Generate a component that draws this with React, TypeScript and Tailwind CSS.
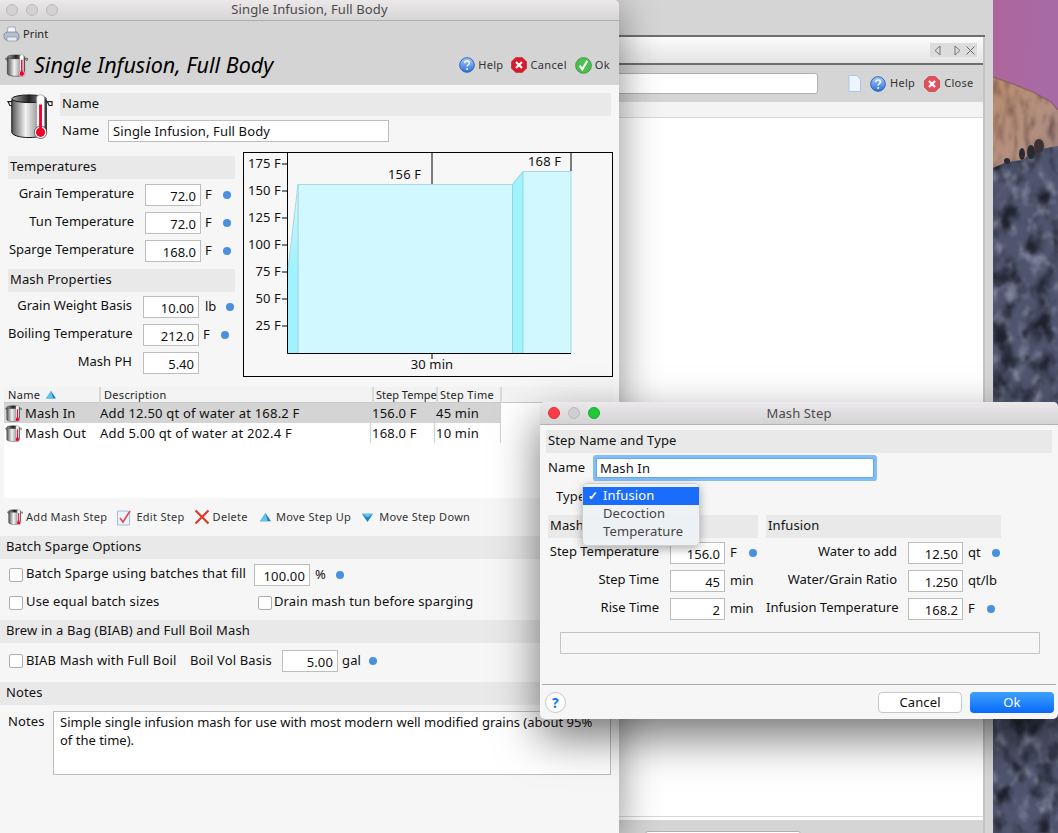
import type { ReactNode } from 'react';

function PotIcon({ size = 20 }: { size?: number }) {
  return (
    <svg width={size} height={size} viewBox="0 0 48 48" className="shrink-0">
      <defs>
        <linearGradient id="potBody" x1="0" x2="1" y1="0" y2="0">
          <stop offset="0" stopColor="#555" />
          <stop offset="0.4" stopColor="#f2f2f2" />
          <stop offset="0.7" stopColor="#a8a8a8" />
          <stop offset="1" stopColor="#444" />
        </linearGradient>
        <linearGradient id="potIn" x1="0" x2="1" y1="0" y2="0">
          <stop offset="0" stopColor="#aaa" />
          <stop offset="0.5" stopColor="#222" />
          <stop offset="1" stopColor="#aaa" />
        </linearGradient>
      </defs>
      <path d="M1 9h5v4H3zM42 9h5v4h-3z" fill="none" stroke="#222" strokeWidth="1.2" />
      <path d="M5 7v34c0 3 8 5.5 18 5.5s18-2.500 18-5.500V7z" fill="url(#potBody)" stroke="#111" strokeWidth="1" />
      <ellipse cx="23" cy="6" rx="18" ry="4" fill="url(#potIn)" stroke="#111" strokeWidth="1" />
      <rect x="31" y="2" width="8" height="35" rx="3" fill="#fff" stroke="#999" strokeWidth="0.8" />
      <circle cx="35" cy="41" r="6.500" fill="#fff" stroke="#444" strokeWidth="0.8" />
      <rect x="33.500" y="12" width="3" height="26" fill="#f5002c" />
      <circle cx="35" cy="41" r="4.800" fill="#f5002c" />
    </svg>
  );
}

function HelpIcon({ size = 16 }: { size?: number }) {
  return (
    <svg width={size} height={size} viewBox="0 0 16 16" className="shrink-0">
      <defs>
        <linearGradient id="helpFill" x1="0" x2="0" y1="0" y2="1">
          <stop offset="0" stopColor="#a9ccf7" />
          <stop offset="1" stopColor="#2c6fdc" />
        </linearGradient>
      </defs>
      <circle cx="8" cy="8" r="7.300" fill="url(#helpFill)" stroke="#2458b5" strokeWidth="0.9" />
      <path d="M5.600 6.200c0-1.500 1-2.200 2.400-2.200s2.400.8 2.400 2c0 1.700-2.300 1.800-2.300 3.600" fill="none" stroke="#fff" strokeWidth="1.500" />
      <circle cx="8.100" cy="12" r="1" fill="#fff" />
    </svg>
  );
}

function CancelIcon({ size = 16, light = false }: { size?: number; light?: boolean }) {
  return (
    <svg width={size} height={size} viewBox="0 0 16 16" className="shrink-0">
      <path d="M4.800.4h6.400L15.600 4.800v6.400L11.200 15.600H4.800L.4 11.200V4.800z" fill={light ? '#e4505a' : '#d81b2c'} stroke="#a51622" strokeWidth="0.5" />
      <path d="M5 5l6 6M11 5l-6 6" stroke="#fff" strokeWidth="2.200" />
    </svg>
  );
}

function OkIcon() {
  return (
    <svg width={17} height={17} viewBox="0 0 16 16" className="shrink-0">
      <circle cx="8" cy="8" r="7.400" fill="#4cc04f" stroke="#2c8b35" strokeWidth="0.7" />
      <path d="M4.400 8.200l2.500 3.400L11.600 3.600" fill="none" stroke="#fff" strokeWidth="2" />
    </svg>
  );
}

function PrinterIcon() {
  return (
    <svg width={17} height={17} viewBox="0 0 17 17" className="shrink-0">
      <path d="M5 1h7l1 6H4z" fill="#f4f6fa" stroke="#8b97a8" strokeWidth="0.7" />
      <path d="M1 8l3-2h10l2 3v4l-2 1H3l-2-2z" fill="#b5c0cc" stroke="#6f7d8c" strokeWidth="0.7" />
      <path d="M4 11h10v4H4z" fill="#e6ebf1" stroke="#7f8b99" strokeWidth="0.6" />
    </svg>
  );
}

function Triangle({ down = false, size = 9 }: { down?: boolean; size?: number }) {
  return (
    <svg width={size} height={size} viewBox="0 0 10 10" className="shrink-0">
      <path d={down ? 'M0 1.500h10L5 9z' : 'M5 1L10 8.500H0z'} fill="#1c7fc8" />
      <path d={down ? 'M0 1.500h10L5 5z' : 'M5 1L7 8.500H0z'} fill="#6fd0f2" opacity="0.85" />
    </svg>
  );
}

function Dot() {
  return <span className="block w-[8px] h-[8px] rounded-full bg-[#4a90e2] shrink-0" />;
}

function Bar({ children, className = '' }: { children: ReactNode; className?: string }) {
  return (
    <div className={`h-[23px] bg-[#e9e9e9] flex items-center pb-[2px] text-[13px] ${className}`}>{children}</div>
  );
}

function NumBox({ value, w = 56 }: { value: string; w?: number }) {
  return (
    <div
      className="h-[22px] bg-white border border-[#bdbdbd] text-right pr-[4px] pt-[2px] text-[13px] leading-[18px] shrink-0"
      style={{ width: w }}
    >
      {value}
    </div>
  );
}

function Check() {
  return <span className="block w-[14px] h-[14px] rounded-[2px] bg-white border border-[#aeaeae] shrink-0" />;
}

function FormRow({ label, value, unit, inputAt, dotGap, unitGap = 4 }: { label: string; value: string; unit?: string; inputAt: number; dotGap?: number; unitGap?: number }) {
  return (
    <div className="h-[28px] flex items-center text-[13px] tracking-normal">
      <span className="text-right pr-[11px] pb-[2px] whitespace-nowrap shrink-0" style={{ width: inputAt }}>{label}</span>
      <NumBox value={value} />
      {unit && <span className="pb-[1px]" style={{ marginLeft: unitGap }}>{unit}</span>}
      {dotGap !== undefined && <span style={{ marginLeft: dotGap }}><Dot /></span>}
    </div>
  );
}

function DialogRow({ label, value, unit, labelW, dotGap }: { label: string; value: string; unit: string; labelW: number; dotGap?: number }) {
  return (
    <div className="h-[28px] flex items-center text-[13px] tracking-normal">
      <span className="text-right pr-[11px] pb-[2px] whitespace-nowrap shrink-0" style={{ width: labelW }}>{label}</span>
      <NumBox value={value} w={55} />
      <span className="ml-[5px] pb-[1px]">{unit}</span>
      {dotGap !== undefined && <span style={{ marginLeft: dotGap }}><Dot /></span>}
    </div>
  );
}

function Light({ color }: { color: string }) {
  return <span className={`block w-[12px] h-[12px] rounded-full border ${color}`} />;
}

function TempChart() {
  const ticks = [
    ['175 F', 11],
    ['150 F', 38],
    ['125 F', 65],
    ['100 F', 92],
    ['75 F', 119],
    ['50 F', 146],
    ['25 F', 173],
  ] as const;
  return (
    <svg width="370" height="225" className="block border border-black bg-[#f7f7f7] shrink-0">
      <defs>
        <linearGradient id="ramp" x1="0" x2="0" y1="0" y2="1">
          <stop offset="0" stopColor="#d2f8ff" />
          <stop offset="0.5" stopColor="#a0f2fd" />
          <stop offset="1" stopColor="#a0f2fd" />
        </linearGradient>
      </defs>
      <path d="M54 31.500H268.500L279 18.500H327V200.500H54Z" fill="#d2f8ff" stroke="#a6d9e1" />
      <path d="M43.500 120L54 31.500V200.500H43.500Z" fill="url(#ramp)" stroke="#a6d9e1" />
      <path d="M268.500 31.500L279 18.500V200.500H268.500Z" fill="#a0f2fd" stroke="#8fd6e0" />
      <path d="M43.500 0V200.500H327M327 0V18M188 0V31M188 200V206" stroke="#000" fill="none" />
      {ticks.map(([t, y]) => (
        <g key={t}>
          <path d={`M38 ${y}H43`} stroke="#000" />
          <text x="37" y={y + 4} textAnchor="end" fontSize="13" fill="#111">{t}</text>
        </g>
      ))}
      <text x="144" y="26" fontSize="13" fill="#111">156 F</text>
      <text x="284" y="13" fontSize="13" fill="#111">168 F</text>
      <text x="188" y="216" textAnchor="middle" fontSize="13" fill="#111">30 min</text>
    </svg>
  );
}

function Wallpaper() {
  const rock = 'M0 168L14 162L30 160L42 150L65 146V833H0Z';
  const dome = 'M0 77L20 84L42 93L58 102L65 110V150L0 170Z';
  return (
    <svg width="65" height="833" viewBox="0 0 65 833" className="block">
      <defs>
        <linearGradient id="sky" x1="0" x2="1" y1="0" y2="0.15">
          <stop offset="0" stopColor="#ad669c" />
          <stop offset="1" stopColor="#a76aa6" />
        </linearGradient>
        <linearGradient id="dome" x1="0" x2="1" y1="0" y2="1">
          <stop offset="0" stopColor="#bb8c6e" />
          <stop offset="0.6" stopColor="#b39080" />
          <stop offset="1" stopColor="#987e7e" />
        </linearGradient>
        <filter id="streak" x="0" y="0" width="100%" height="100%" colorInterpolationFilters="sRGB">
          <feTurbulence type="fractalNoise" baseFrequency="0.16 0.05" numOctaves="3" seed="8" />
          <feColorMatrix values="0 0 0 0 0.36  0 0 0 0 0.26  0 0 0 0 0.24  1.600 0 0 0 -0.700" />
          <feGaussianBlur stdDeviation="0.8" />
          <feComposite in2="SourceGraphic" operator="in" />
        </filter>
        <filter id="rockDark" x="0" y="0" width="100%" height="100%" colorInterpolationFilters="sRGB">
          <feTurbulence type="fractalNoise" baseFrequency="0.05 0.035" numOctaves="5" seed="5" />
          <feColorMatrix values="0 0 0 0 0.12  0 0 0 0 0.13  0 0 0 0 0.18  3.500 0 0 0 -1.650" />
          <feGaussianBlur stdDeviation="0.8" />
          <feComposite in2="SourceGraphic" operator="in" />
        </filter>
        <filter id="rockLight" x="0" y="0" width="100%" height="100%" colorInterpolationFilters="sRGB">
          <feTurbulence type="fractalNoise" baseFrequency="0.08 0.06" numOctaves="5" seed="21" />
          <feColorMatrix values="0 0 0 0 0.58  0 0 0 0 0.60  0 0 0 0 0.68  0 2.500 0 0 -1.250" />
          <feGaussianBlur stdDeviation="0.8" />
          <feComposite in2="SourceGraphic" operator="in" />
        </filter>
      </defs>
      <rect width="65" height="833" fill="url(#sky)" />
      <path d={dome} fill="url(#dome)" />
      <path d={dome} filter="url(#streak)" />
      <path d="M0 77L20 84L42 93L58 102L65 110" fill="none" stroke="#6e4c3e" strokeWidth="1.200" opacity="0.5" />
      <path d={rock} fill="#4f556e" />
      <path d={rock} filter="url(#rockLight)" />
      <path d={rock} filter="url(#rockDark)" />
      <ellipse cx="29" cy="154" rx="3" ry="6" fill="#2b2a30" />
      <ellipse cx="38" cy="152" rx="4" ry="7" fill="#2b2a30" />
      <ellipse cx="46" cy="146" rx="5" ry="7" fill="#3a3234" />
      <ellipse cx="14" cy="161" rx="3" ry="3" fill="#2b2a30" />
    </svg>
  );
}

function BackWindow() {
  return (
    <div className="absolute left-[400px] top-0 w-[593px] h-[833px] bg-[#d5d5d5] flex flex-col">
      <div className="h-[35px] shrink-0" />
      <div className="h-[2px] bg-[#6f6f6f] mr-[8px]" />
      <div className="flex-1 mr-[8px] border-r-2 border-[#c4c4c4] bg-white flex flex-col min-h-0">
        <div className="h-[28px] shrink-0 bg-gradient-to-b from-[#fbfbfb] to-[#e4e4e4] border-b-2 border-[#6d6d6d] flex justify-end items-start">
          <div className="w-[47px] h-[14px] mt-[6px] mr-[6px] bg-[#dcdcdc] flex items-center justify-between pl-[4px] pr-[2px] text-[#555]">
            <svg width="7" height="11" viewBox="0 0 7 11"><path d="M6 1L1 5.500L6 10Z" fill="none" stroke="#777" /></svg>
            <svg width="7" height="11" viewBox="0 0 7 11" className="ml-[8px]"><path d="M1 1L6 5.500L1 10Z" fill="none" stroke="#777" /></svg>
            <svg width="9" height="9" viewBox="0 0 9 9"><path d="M.5 .5l8 8M8.500 .5l-8 8" stroke="#666" /></svg>
          </div>
        </div>
        <div className="h-[37px] shrink-0 bg-[#d5d5d5] flex items-center text-[11px] tracking-[0.3px] text-[#333]">
          <div className="w-[418px] h-[21px] bg-white border border-[#b0b0b0] rounded-[3px]" />
          <svg width="13" height="17" viewBox="0 0 13 17" className="ml-[30px]">
            <path d="M1 .5h8l3.500 4v12H1z" fill="#eef5ff" stroke="#a9c6ea" />
          </svg>
          <span className="ml-[9px] mr-[4px]"><HelpIcon /></span>
          Help
          <span className="ml-[9px] mr-[4px]"><CancelIcon light /></span>
          Close
        </div>
        <div className="h-[16px] shrink-0 bg-[#f4f4f4] border-b border-[#d8d8d8]" />
        <div className="flex-1" />
        <div className="h-[4px] shrink-0 border-t border-[#d8d8d8] bg-white" />
        <div className="h-[13px] shrink-0 bg-[#d5d5d5] pl-[245px]">
          <div className="w-[156px] h-[13px] mt-[11px] bg-white border border-[#b0b0b0] rounded-[3px]" />
        </div>
      </div>
    </div>
  );
}

function MainWindow() {
  const toolLink = 'flex items-center gap-[3px] text-[11px] tracking-[0.35px] text-[#333]';
  return (
    <div className="absolute left-0 top-0 w-[619px] h-[833px] bg-[#f6f6f6] rounded-tr-[5px] shadow-[0_8px_40px_rgba(0,0,0,0.45)] flex flex-col text-[#111] overflow-hidden">
      <div className="h-[21px] shrink-0 bg-gradient-to-b from-[#ebe8ea] to-[#d7d5d6] border-b border-[#b0aeb0] relative flex items-center justify-center text-[13px] tracking-[0.1px] text-[#4a4a4a]">
        <div className="absolute left-[6px] top-[4px] flex gap-[8px]">
          <Light color="bg-[#d3d2d2] border-[#bdbcbc]" />
          <Light color="bg-[#d3d2d2] border-[#bdbcbc]" />
          <Light color="bg-[#d3d2d2] border-[#bdbcbc]" />
        </div>
        Single Infusion, Full Body
      </div>
      <div className="h-[64px] shrink-0 bg-[#d4d4d4] flex flex-col">
        <div className="h-[27px] flex items-center pl-[3px] gap-[3px] text-[11px] tracking-[0.1px] text-[#222]">
          <PrinterIcon /> Print
        </div>
        <div className="flex items-center h-[30px] mt-[2px] pl-[5px] pr-[9px]">
          <PotIcon size={23} />
          <span className="ml-[6px] text-[21.5px] italic text-black">Single Infusion, Full Body</span>
          <div className="ml-auto flex items-center gap-[8px]">
            <span className={toolLink}><HelpIcon /> Help</span>
            <span className={toolLink}><CancelIcon /> Cancel</span>
            <span className={toolLink}><OkIcon /> Ok</span>
          </div>
        </div>
      </div>

      <div className="pt-[8px] flex flex-col tracking-[0.13px]">
        <div className="flex pl-[7px] pr-[8px]">
          <PotIcon size={46} />
          <div className="flex-1 ml-[7px]">
            <Bar className="pl-[2px]">Name</Bar>
            <div className="flex items-center mt-[4px] text-[13px]">
              <span className="ml-[2px] w-[46px] pb-[1px]">Name</span>
              <div className="w-[281px] h-[22px] bg-white border border-[#bdbdbd] pl-[4px] leading-[21px]">Single Infusion, Full Body</div>
            </div>
          </div>
        </div>

        <div className="flex mt-[10px] pl-[8px]">
          <div className="w-[227px] pt-[4px]">
            <Bar className="pl-[2px]">Temperatures</Bar>
            <div className="pt-[2px]">
              <FormRow label="Grain Temperature" value="72.0" unit="F" inputAt={137} dotGap={11} />
              <FormRow label="Tun Temperature" value="72.0" unit="F" inputAt={137} dotGap={11} />
              <FormRow label="Sparge Temperature" value="168.0" unit="F" inputAt={137} dotGap={11} />
            </div>
            <Bar className="pl-[2px] mt-[4px]">Mash Properties</Bar>
            <div className="pt-[1px]">
              <FormRow label="Grain Weight Basis" value="10.00" unit="lb" inputAt={135} dotGap={10} unitGap={6} />
              <FormRow label="Boiling Temperature" value="212.0" unit="F" inputAt={135} dotGap={11} />
              <FormRow label="Mash PH" value="5.40" inputAt={135} />
            </div>
          </div>
          <div className="ml-[8px]"><TempChart /></div>
        </div>

        <div className="mt-[10px] ml-[4px] mr-[6px] h-[111px] bg-white flex flex-col">
          <div className="h-[16px] bg-[#f3f3f3] border-b border-[#c9c9c9] flex items-center pt-[1px] text-[11px] text-[#222] tracking-[0.3px]">
            <div className="w-[97px] pl-[4px] flex items-center gap-[6px] border-r-2 border-[#d8d8d8]">Name <Triangle size={10} /></div>
            <div className="w-[273px] pl-[3px] border-r-2 border-[#d8d8d8]">Description</div>
            <div className="w-[64px] pl-[2px] border-r-2 border-[#d8d8d8] whitespace-nowrap tracking-normal">Step Tempe</div>
            <div className="w-[64px] pl-[2px] border-r-2 border-[#d8d8d8]">Step Time</div>
          </div>
          {[
            ['Mash In', 'Add 12.50 qt of water at 168.2 F', '156.0 F', '45 min', 'bg-[#d4d4d4]'],
            ['Mash Out', 'Add 5.00 qt of water at 202.4 F', '168.0 F', '10 min', 'bg-white'],
          ].map(([n, d, t, m, bg]) => (
            <div key={n} className={`h-[20px] w-[497px] flex items-center text-[13px] tracking-[0.2px] ${bg}`}>
              <div className="w-[92px] flex items-center gap-[3px] pl-[1px] shrink-0"><PotIcon size={17} /> <span className="pt-[1px]">{n}</span></div>
              <div className="w-[275px] h-full leading-[21px] pl-[4px] border-r border-[#d0d0d0] shrink-0">{d}</div>
              <div className="w-[64px] h-full leading-[21px] pl-[1px] border-r border-[#d0d0d0] shrink-0">{t}</div>
              <div className="flex-1 h-full leading-[21px] pl-[1px] border-r border-[#d0d0d0]">{m}</div>
            </div>
          ))}
        </div>

        <div className="h-[38px] flex items-center pl-[7px] text-[11px] text-[#333] tracking-[0.3px]">
          <span className="flex items-center gap-[3px]"><PotIcon size={16} /> Add Mash Step</span>
          <span className="flex items-center gap-[3px] ml-[9px]">
            <svg width="17" height="17" viewBox="0 0 17 17">
              <path d="M1.500 2h10l2 3v11h-12z" fill="#eaf2fb" stroke="#a9bcd4" />
              <path d="M4 9l3 4 7-11" fill="none" stroke="#e04a4a" strokeWidth="1.600" />
            </svg>
            Edit Step
          </span>
          <span className="flex items-center gap-[3px] ml-[9px]">
            <svg width="16" height="16" viewBox="0 0 16 16">
              <path d="M1.500 1.500l13 13M14.500 1.500l-13 13" stroke="#dc3a2a" strokeWidth="2.200" />
            </svg>
            Delete
          </span>
          <span className="flex items-center gap-[5px] ml-[12px]"><Triangle size={11} /> Move Step Up</span>
          <span className="flex items-center gap-[6px] ml-[11px]"><Triangle down size={11} /> Move Step Down</span>
        </div>

        <Bar className="pl-[6px] mr-[7px]">Batch Sparge Options</Bar>
        <div className="h-[31px] pl-[9px] flex items-center text-[13px]">
          <Check />
          <span className="ml-[3px] w-[228px] pb-[1px]">Batch Sparge using batches that fill</span>
          <NumBox value="100.00" />
          <span className="ml-[5px]">%</span>
          <span className="ml-[10px]"><Dot /></span>
        </div>
        <div className="h-[25px] pl-[9px] flex items-center text-[13px]">
          <Check />
          <span className="ml-[3px] w-[232px] pb-[1px]">Use equal batch sizes</span>
          <Check />
          <span className="ml-[2px] pb-[1px]">Drain mash tun before sparging</span>
        </div>
        <Bar className="mt-[5px] pl-[6px] mr-[7px]">Brew in a Bag (BIAB) and Full Boil Mash</Bar>
        <div className="h-[39px] pb-[3px] pl-[9px] flex items-center text-[13px]">
          <Check />
          <span className="ml-[3px] w-[164px] pb-[1px]">BIAB Mash with Full Boil</span>
          <span className="w-[92px] pb-[1px]">Boil Vol Basis</span>
          <NumBox value="5.00" />
          <span className="ml-[4px]">gal</span>
          <span className="ml-[8px]"><Dot /></span>
        </div>
        <Bar className="pl-[6px] mr-[7px]">Notes</Bar>
        <div className="flex mt-[6px] pl-[8px] mr-[8px] text-[13px]">
          <span className="w-[45px] pt-[1px]">Notes</span>
          <div className="flex-1 h-[64px] bg-white border border-[#bdbdbd] px-[6px] pt-[1px] leading-[18px] tracking-normal">
            Simple single infusion mash for use with most modern well modified grains (about 95% of the time).
          </div>
        </div>
      </div>
    </div>
  );
}

function MashStepDialog() {
  return (
    <div className="absolute left-[540px] top-[402px] w-[518px] h-[317px] bg-[#f6f6f6] rounded-[5px] shadow-[0_18px_45px_rgba(0,0,0,0.55)] flex flex-col text-[#111] tracking-[0.13px]">
      <div className="h-[23px] shrink-0 rounded-t-[5px] bg-gradient-to-b from-[#ebe9eb] to-[#d4d3d4] border-b border-[#b4b3b4] relative flex items-center justify-center pt-[1px] text-[13px] text-[#4a4a4a]">
        <div className="absolute left-[8px] top-[5px] flex gap-[8px]">
          <Light color="bg-[#fc3f46] border-[#dd2f36]" />
          <Light color="bg-[#d0cfd0] border-[#bbb]" />
          <Light color="bg-[#1fc938] border-[#19ab2e]" />
        </div>
        Mash Step
      </div>
      <div className="relative flex-1 flex flex-col">
        <Bar className="mt-[5px] mx-[6px] pl-[2px]">Step Name and Type</Bar>
        <div className="flex items-center h-[26px] mt-[2px] pl-[8px] text-[13px]">
          <span className="w-[48px] pb-[1px]">Name</span>
          <div className="w-[278px] h-[20px] bg-white border border-[#5fa8ef] shadow-[0_0_0_3px_#83bdf5] rounded-[1px] pl-[3px] leading-[19px]">Mash In</div>
        </div>
        <div className="h-[34px] pl-[16px] pt-[6px] text-[13px]">Type</div>
        <div className="flex pl-[8px] gap-[8px]">
          <div className="w-[210px]">
            <Bar className="pl-[2px]">Mash</Bar>
            <div className="pt-[1px]">
              <DialogRow label="Step Temperature" value="156.0" unit="F" labelW={122} dotGap={12} />
              <DialogRow label="Step Time" value="45" unit="min" labelW={122} />
              <DialogRow label="Rise Time" value="2" unit="min" labelW={122} />
            </div>
          </div>
          <div className="w-[235px]">
            <Bar className="pl-[2px]">Infusion</Bar>
            <div className="pt-[1px]">
              <DialogRow label="Water to add" value="12.50" unit="qt" labelW={142} dotGap={11} />
              <DialogRow label="Water/Grain Ratio" value="1.250" unit="qt/lb" labelW={142} />
              <DialogRow label="Infusion Temperature" value="168.2" unit="F" labelW={142} dotGap={12} />
            </div>
          </div>
        </div>
        <div className="mt-[9px] ml-[20px] w-[480px] h-[22px] border border-[#c4c4c4]" />
        <div className="mt-[30px] mx-[2px] h-px bg-[#a9a9a9]" />
        <div className="flex items-center h-[34px] px-[5px] text-[13px]">
          <span className="w-[21px] h-[21px] rounded-full bg-white border border-[#c6c6c6] text-[#0a7bf0] text-center text-[14px] leading-[19px] font-bold">?</span>
          <span className="ml-auto w-[84px] h-[21px] rounded-[4px] bg-white border border-[#c8c8c8] text-center leading-[19px]">Cancel</span>
          <span className="ml-[8px] mr-[-1px] w-[84px] h-[21px] rounded-[4px] bg-gradient-to-b from-[#3ea0fb] to-[#0768fb] text-white text-center leading-[21px]">Ok</span>
        </div>

        <div className="absolute left-[42px] top-[58px] w-[118px] h-[63px] rounded-[5px] bg-[#eef1f3]/95 border border-[#cfcfcf] shadow-[0_3px_10px_rgba(0,0,0,0.3)] pt-[3px] text-[13px] text-[#444]">
          <div className="h-[18px] bg-[#1a6dfb] text-white flex items-center pl-[5px]">
            <span className="w-[15px] text-[12px] font-bold">✓</span>Infusion
          </div>
          <div className="h-[18px] flex items-center pl-[20px]">Decoction</div>
          <div className="h-[18px] flex items-center pl-[20px]">Temperature</div>
        </div>
      </div>
    </div>
  );
}

export default function App() {
  return (
    <div className="relative w-[1058px] h-[833px] overflow-hidden bg-[#d5d5d5] font-['Liberation_Sans',Arial,sans-serif]">
      <div className="absolute left-[993px] top-0"><Wallpaper /></div>
      <BackWindow />
      <MainWindow />
      <MashStepDialog />
    </div>
  );
}
